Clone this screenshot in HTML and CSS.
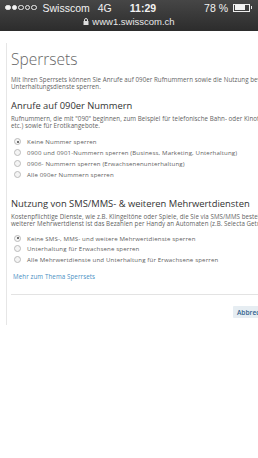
FILE: index.html
```html
<!DOCTYPE html>
<html lang="de">
<head>
  <meta charset="UTF-8" />
  <meta name="viewport" content="width=device-width, initial-scale=1.0" />
  <title>Sperrsets</title>
  <link rel="stylesheet" href="styles.css">
</head>
<body>
  <div class="statusbar">
    <div class="status-row">
      <span class="signal"><i class="on"></i><i class="on"></i><i></i><i></i><i></i></span>
      <span class="carrier">Swisscom</span>
      <span class="net">4G</span>
      <span class="time">11:29</span>
      <span class="akku">78 %</span>
      <span class="battery"><span class="battery-fill"></span></span>
    </div>
    <div class="url-row">
      <svg class="lock" width="6" height="7" viewBox="0 0 6 7">
        <path d="M1.5 3V2a1.5 1.5 0 0 1 3 0v1" fill="none" stroke="#ddd" stroke-width="1"/>
        <rect x="0.5" y="3" width="5" height="4" fill="#ddd"/>
      </svg>
      <span>www1.swisscom.ch</span>
    </div>
  </div>

  <div class="modal">
    <h1>Sperrsets</h1>
    <p>Mit Ihren Sperrsets können Sie Anrufe auf 090er Rufnummern sowie die Nutzung bevorzugter<br>Unterhaltungsdienste sperren.</p>

    <h2>Anrufe auf 090er Nummern</h2>
    <p>Rufnummern, die mit "090" beginnen, zum Beispiel für telefonische Bahn- oder Kinoticketbestellungen<br>etc.) sowie für Erotikangebote.</p>
    <ul class="optionen">
      <li><span class="radio checked"></span>Keine Nummer sperren</li>
      <li><span class="radio"></span>0900 und 0901-Nummern sperren (Business, Marketing, Unterhaltung)</li>
      <li><span class="radio"></span>0906- Nummern sperren (Erwachsenenunterhaltung)</li>
      <li><span class="radio"></span>Alle 090er Nummern sperren</li>
    </ul>

    <h2 class="zweite">Nutzung von SMS/MMS- &amp; weiteren Mehrwertdiensten</h2>
    <p>Kostenpflichtige Dienste, wie z.B. Klingeltöne oder Spiele, die Sie via SMS/MMS bestellen können. Ein<br>weiterer Mehrwertdienst ist das Bezahlen per Handy an Automaten (z.B. Selecta Getränkeautomaten).</p>
    <ul class="optionen kurz">
      <li><span class="radio checked"></span>Keine SMS-, MMS- und weitere Mehrwertdienste sperren</li>
      <li><span class="radio"></span>Unterhaltung für Erwachsene sperren</li>
      <li><span class="radio"></span>Alle Mehrwertdienste und Unterhaltung für Erwachsene sperren</li>
    </ul>

    <a class="mehr" href="#">Mehr zum Thema Sperrsets</a>

    <div class="footer">
      <button>Abbrechen</button>
    </div>
  </div>
</body>
</html>
```

FILE: styles.css
```css
body {
  margin: 0;
  padding: 0;
  background: #fff;
  overflow: hidden;
  font-family: "Open Sans", sans-serif;
  color: #5f5f5f;
}
.statusbar {
  height: 31px;
  background: linear-gradient(#464646, #2c2c2c);
  color: #f2f2f2;
  font-family: "Liberation Sans", Arial, sans-serif;
  font-size: 10.5px;
}
.status-row {
  display: flex;
  align-items: center;
  height: 15px;
  padding: 0 5px;
}
.signal {
  display: flex;
  gap: 1px;
}
.signal i {
  width: 3.5px;
  height: 3.5px;
  border: 0.5px solid #eee;
  border-radius: 50%;
}
.signal i.on {
  background: #f2f2f2;
}
.carrier {
  margin-left: 6px;
}
.net {
  margin-left: 8px;
}
.time {
  margin-left: 18px;
  font-weight: bold;
}
.akku {
  margin-left: auto;
}
.battery {
  display: flex;
  width: 14px;
  height: 5px;
  margin: 0 3px 0 5px;
  border: 1px solid #eee;
  padding: 0.5px;
  position: relative;
}
.battery::after {
  content: "";
  position: absolute;
  right: -3px;
  top: 1.5px;
  width: 1.5px;
  height: 3px;
  background: #eee;
}
.battery-fill {
  width: 78%;
  background: #f2f2f2;
}
.url-row {
  display: flex;
  justify-content: center;
  align-items: center;
  gap: 3px;
  height: 13px;
  font-size: 9.5px;
  color: #e8e8e8;
}
.modal {
  width: 420px;
  margin: 12px 0 0 6px;
  padding: 7px 0 3px 4px;
  border-left: 1px solid #e6e6e6;
}
h1 {
  margin: 0 0 8px;
  font-size: 15.5px;
  line-height: 18px;
  font-weight: 300;
  color: #666;
}
h2 {
  margin: 10px 0 4px;
  font-size: 9.4px;
  line-height: 11px;
  font-weight: normal;
  color: #333;
}
h2.zweite {
  margin-top: 18px;
}
p {
  margin: 0;
  font-size: 6.2px;
  letter-spacing: 0.05px;
  line-height: 7px;
  white-space: nowrap;
}
.optionen {
  list-style: none;
  margin: 7px 0 0;
  padding: 0;
}
.optionen li {
  display: flex;
  align-items: center;
  height: 11px;
  font-size: 6.1px;
  letter-spacing: 0.15px;
  white-space: nowrap;
}
.optionen.kurz {
  margin-top: 6px;
}
.optionen.kurz li {
  height: 10.5px;
}
.radio {
  width: 5px;
  height: 5px;
  margin: 0 6px 0 3px;
  border: 0.5px solid #bbb;
  border-radius: 50%;
  background: #f4f4f4;
  display: flex;
  justify-content: center;
  align-items: center;
}
.radio.checked::after {
  content: "";
  width: 2px;
  height: 2px;
  border-radius: 50%;
  background: #444;
}
.mehr {
  display: block;
  margin: 8.5px 0 0 2px;
  font-size: 6.2px;
  letter-spacing: 0.1px;
  line-height: 7px;
  color: #4a8fc4;
  text-decoration: none;
}
.footer {
  margin-top: 13.5px;
  border-top: 1px solid #e3e3e3;
  padding: 3px 0 2px 222px;
}
button {
  padding: 0 4px;
  height: 12px;
  background: #e6edf2;
  border: none;
  border-radius: 1px;
  color: #2f5f8c;
  font-family: "Open Sans", sans-serif;
  font-size: 6.6px;
  font-weight: 600;
}
```
